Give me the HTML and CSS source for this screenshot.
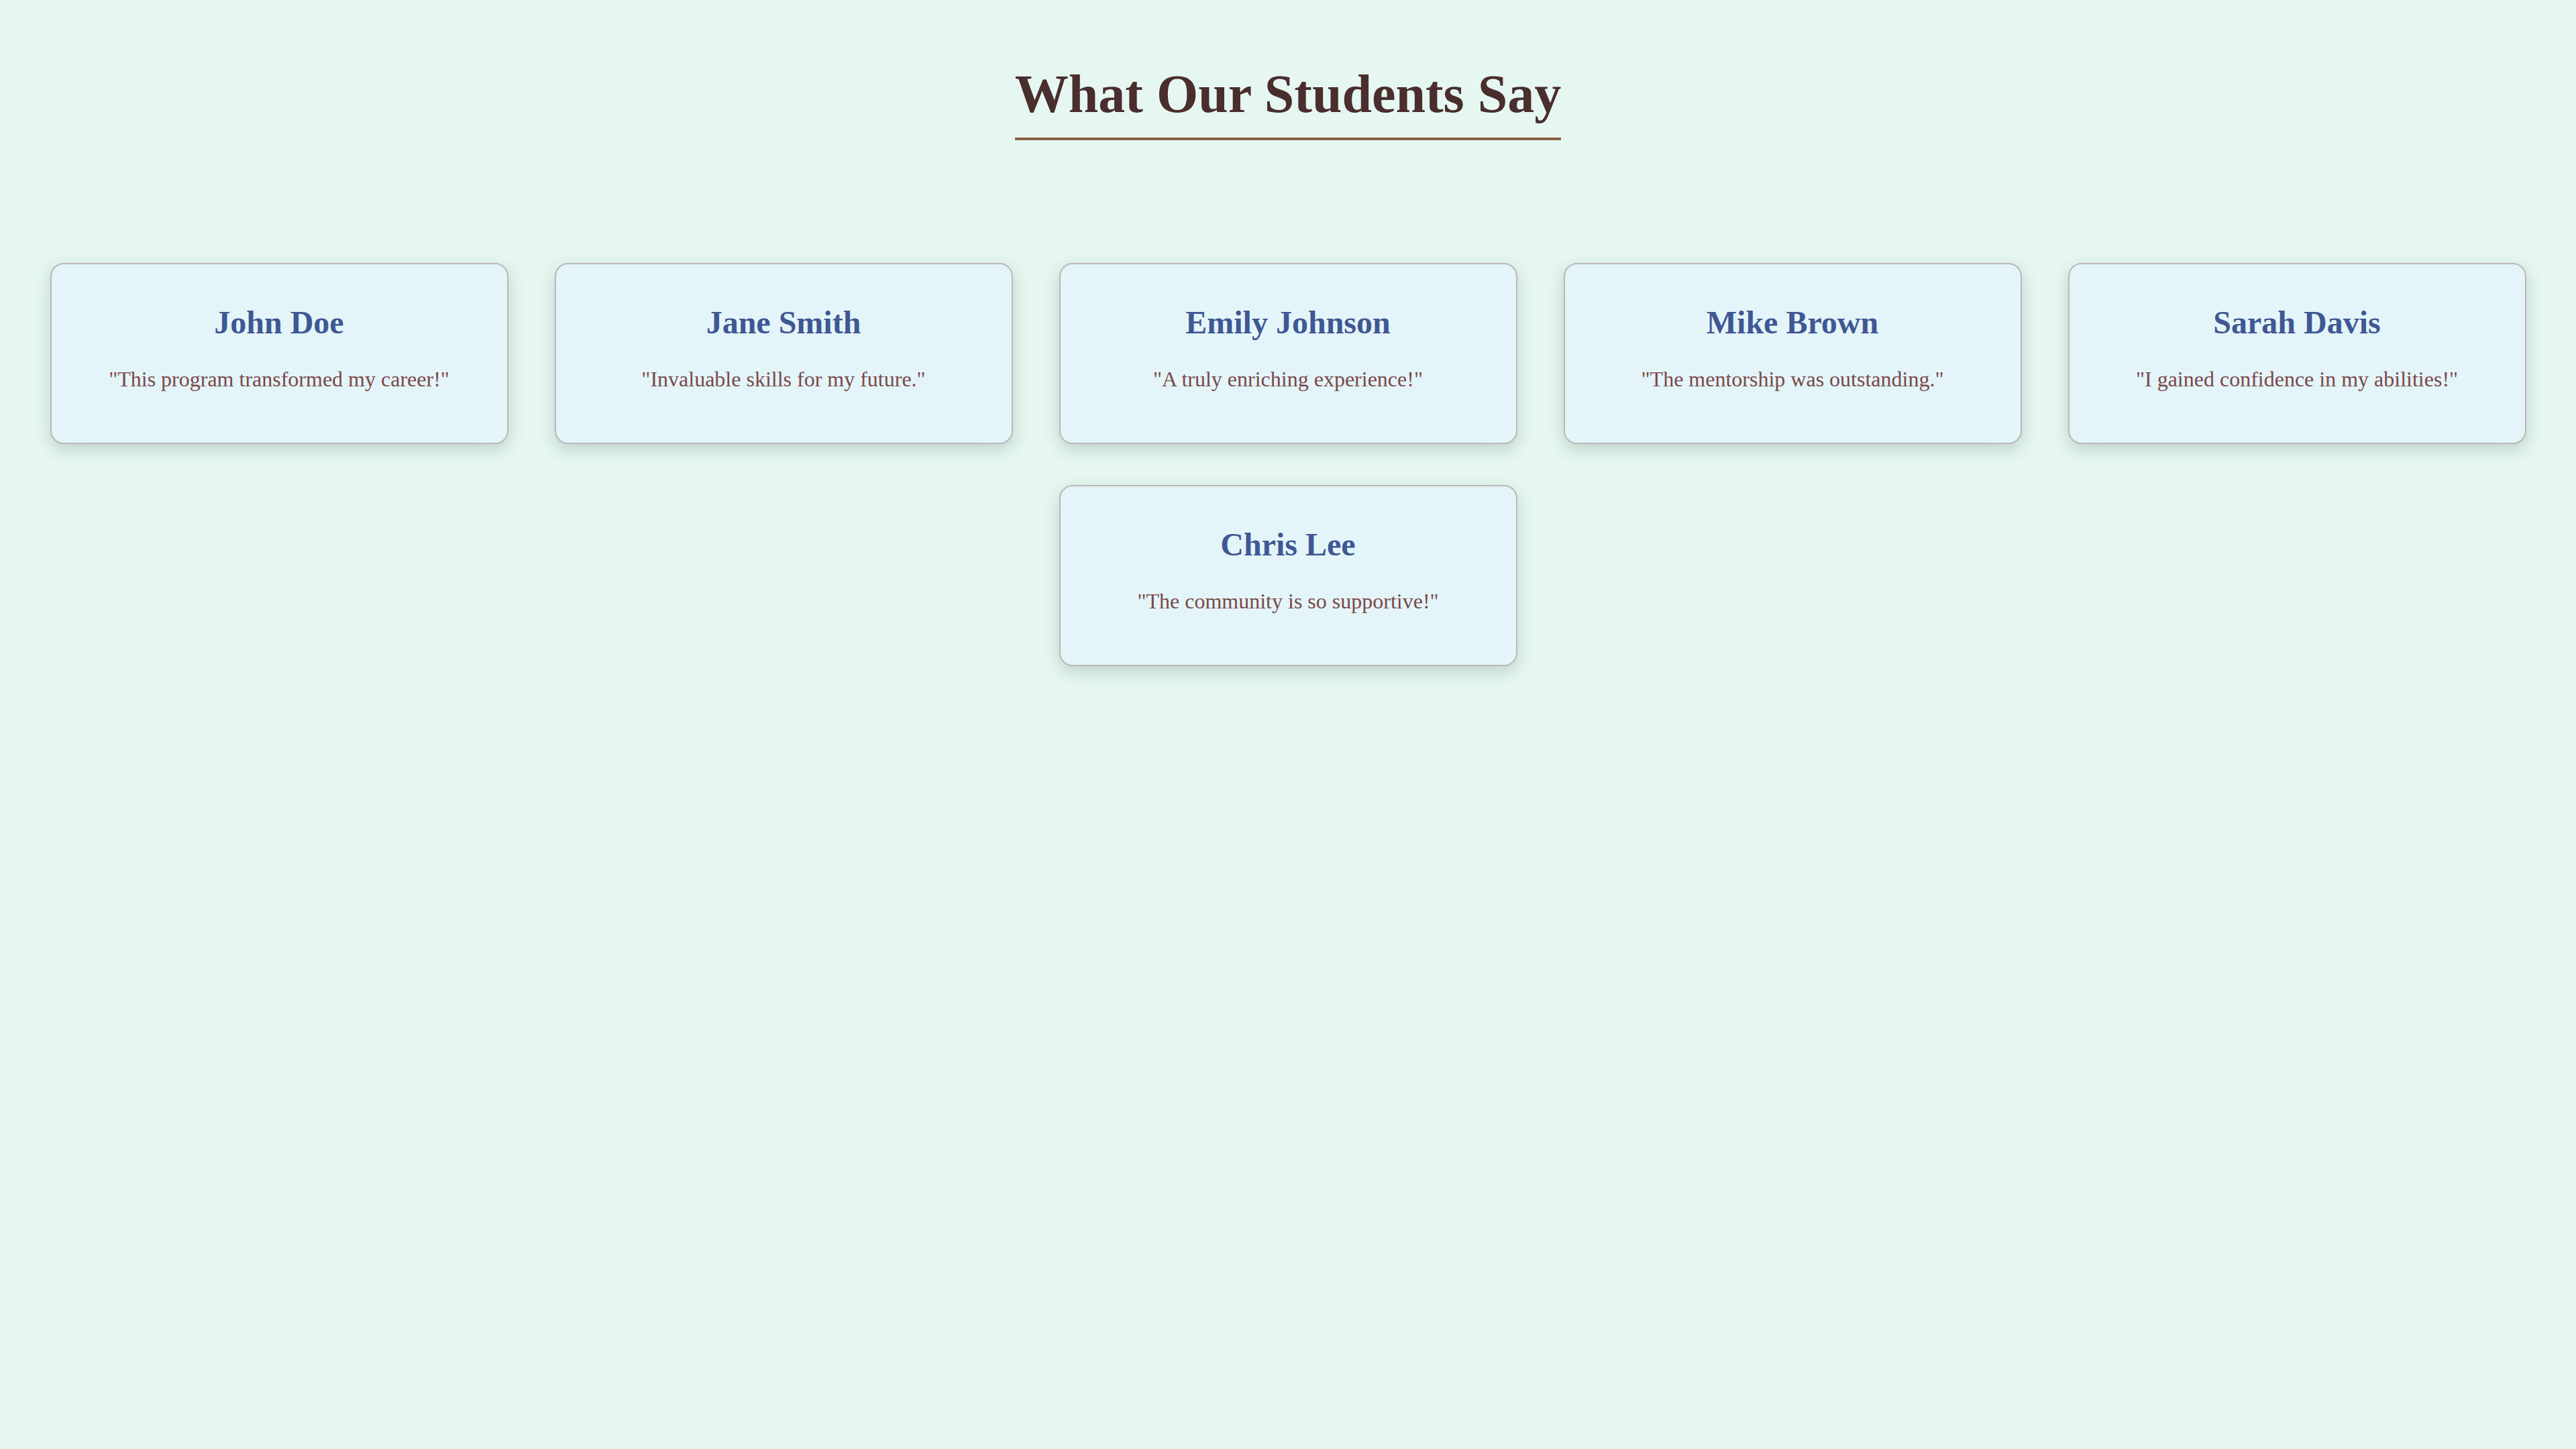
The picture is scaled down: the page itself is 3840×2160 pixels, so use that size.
FILE: index.html
```html
<!DOCTYPE html>
<html lang="en">
<head>
<meta charset="utf-8">
<title>What Our Students Say</title>
<link rel="stylesheet" href="styles.css">
</head>
<body>
<header class="page-header">
  <h1 class="title">What Our Students Say</h1>
</header>
<main class="testimonials">
  <article class="card">
    <h2 class="card-name">John Doe</h2>
    <p class="card-quote">"This program transformed my career!"</p>
  </article>
  <article class="card">
    <h2 class="card-name">Jane Smith</h2>
    <p class="card-quote">"Invaluable skills for my future."</p>
  </article>
  <article class="card">
    <h2 class="card-name">Emily Johnson</h2>
    <p class="card-quote">"A truly enriching experience!"</p>
  </article>
  <article class="card">
    <h2 class="card-name">Mike Brown</h2>
    <p class="card-quote">"The mentorship was outstanding."</p>
  </article>
  <article class="card">
    <h2 class="card-name">Sarah Davis</h2>
    <p class="card-quote">"I gained confidence in my abilities!"</p>
  </article>
  <article class="card">
    <h2 class="card-name">Chris Lee</h2>
    <p class="card-quote">"The community is so supportive!"</p>
  </article>
</main>
</body>
</html>
```
FILE: styles.css
```css
html, body {
  margin: 0;
  padding: 0;
}
body {
  background: #e6f7f1;
  font-family: "Liberation Serif", "Times New Roman", serif;
  min-height: 2160px;
}
.page-header {
  display: flex;
  justify-content: center;
  padding-top: 94px;
}
.title {
  margin: 0;
  font-size: 80px;
  line-height: 92px;
  font-weight: bold;
  color: #4a2d2d;
  padding-bottom: 19px;
  border-bottom: 4px solid #8b5e45;
}
.testimonials {
  display: flex;
  flex-wrap: wrap;
  justify-content: center;
  column-gap: 69px;
  row-gap: 61px;
  margin-top: 183px;
}
.card {
  box-sizing: border-box;
  width: 683px;
  height: 270px;
  background: #e3f5f9;
  border: 2px solid #bcb8b8;
  border-radius: 20px;
  box-shadow: 0 8px 24px rgba(30, 60, 50, 0.2);
  padding: 59px 30px 0;
  text-align: center;
}
.card-name {
  margin: 0;
  font-size: 48px;
  line-height: 56px;
  font-weight: bold;
  color: #3f5894;
}
.card-quote {
  margin: 38px 0 0;
  font-size: 32px;
  line-height: 36px;
  color: #7a4848;
}
```
